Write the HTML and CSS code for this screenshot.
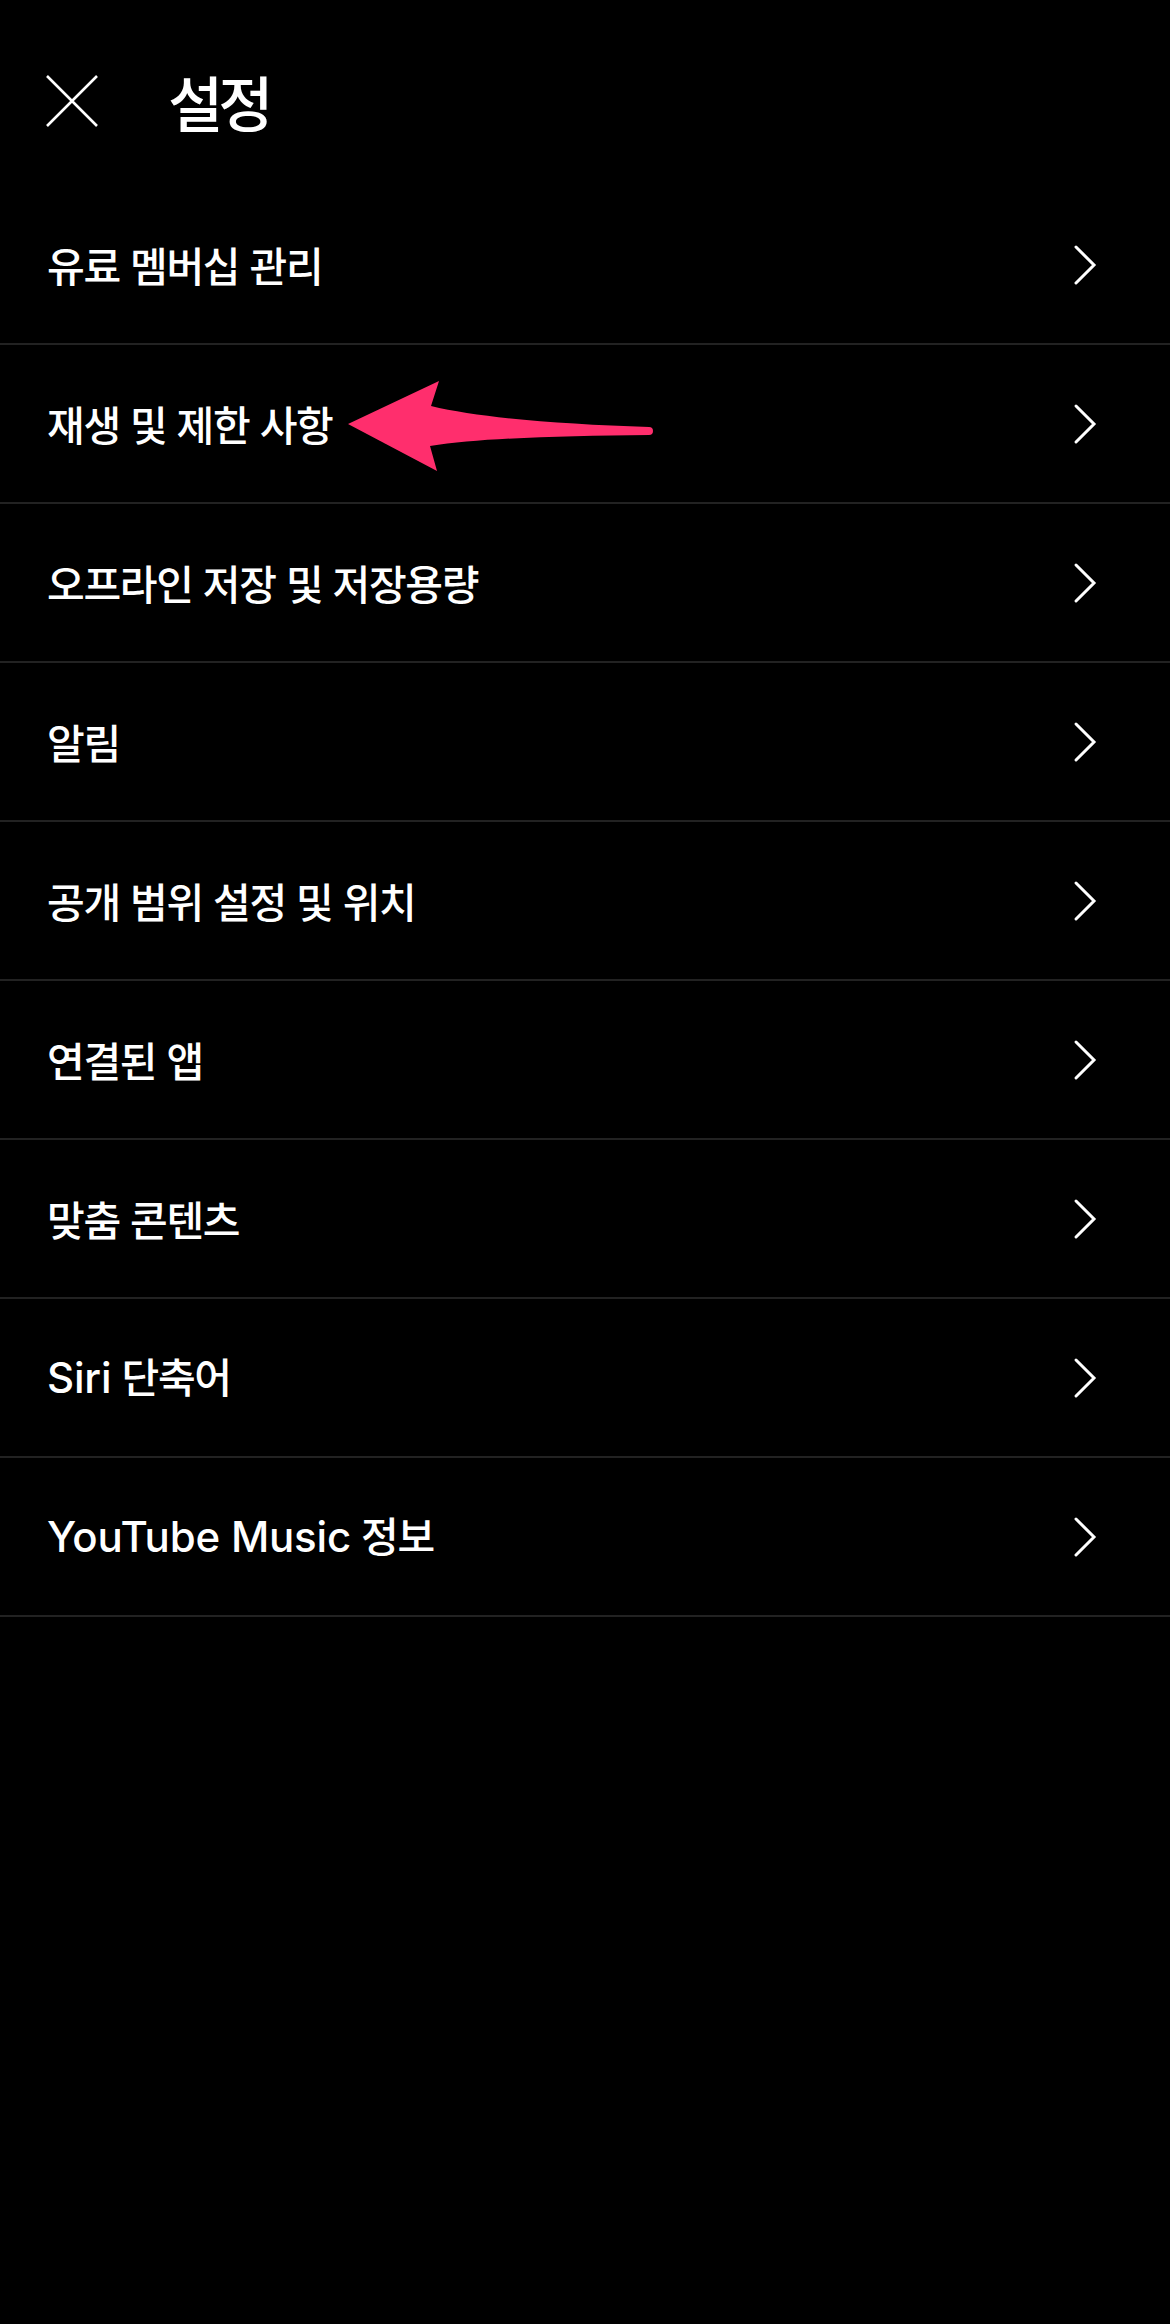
FILE: index.html
```html
<!DOCTYPE html>
<html lang="ko">
<head>
<meta charset="utf-8">
<title>설정</title>
<link rel="stylesheet" href="styles.css">
</head>
<body>
<div class="screen">
  <header class="header">
    <button class="close" aria-label="닫기">
      <svg width="52" height="52" viewBox="0 0 52 52"><path d="M1 1 L51 51 M51 1 L1 51" stroke="#fff" stroke-width="2.6" fill="none"/></svg>
    </button>
    <h1 class="title">설정</h1>
  </header>
  <ul class="list">
    <li class="row"><span class="label">유료 멤버십 관리</span><svg class="chev" width="24" height="42" viewBox="0 0 24 42"><path d="M3 3 L21 21 L3 39" stroke="#fff" stroke-width="3" fill="none" stroke-linecap="round"/></svg></li>
    <li class="row annotated"><span class="label">재생 및 제한 사항</span><svg class="chev" width="24" height="42" viewBox="0 0 24 42"><path d="M3 3 L21 21 L3 39" stroke="#fff" stroke-width="3" fill="none" stroke-linecap="round"/></svg>
      <svg class="arrow" width="320" height="110" viewBox="340 370 320 110"><path d="M348 424 L439 381 L431 406 C480 418 560 424 649 427 A4 4 0 0 1 649 435 C560 436 480 438 430 446 L437 471 Z" fill="#ff2e6d"/></svg>
    </li>
    <li class="row"><span class="label">오프라인 저장 및 저장용량</span><svg class="chev" width="24" height="42" viewBox="0 0 24 42"><path d="M3 3 L21 21 L3 39" stroke="#fff" stroke-width="3" fill="none" stroke-linecap="round"/></svg></li>
    <li class="row"><span class="label">알림</span><svg class="chev" width="24" height="42" viewBox="0 0 24 42"><path d="M3 3 L21 21 L3 39" stroke="#fff" stroke-width="3" fill="none" stroke-linecap="round"/></svg></li>
    <li class="row"><span class="label">공개 범위 설정 및 위치</span><svg class="chev" width="24" height="42" viewBox="0 0 24 42"><path d="M3 3 L21 21 L3 39" stroke="#fff" stroke-width="3" fill="none" stroke-linecap="round"/></svg></li>
    <li class="row"><span class="label">연결된 앱</span><svg class="chev" width="24" height="42" viewBox="0 0 24 42"><path d="M3 3 L21 21 L3 39" stroke="#fff" stroke-width="3" fill="none" stroke-linecap="round"/></svg></li>
    <li class="row"><span class="label">맞춤 콘텐츠</span><svg class="chev" width="24" height="42" viewBox="0 0 24 42"><path d="M3 3 L21 21 L3 39" stroke="#fff" stroke-width="3" fill="none" stroke-linecap="round"/></svg></li>
    <li class="row"><span class="label"><span class="latin">Siri</span> 단축어</span><svg class="chev" width="24" height="42" viewBox="0 0 24 42"><path d="M3 3 L21 21 L3 39" stroke="#fff" stroke-width="3" fill="none" stroke-linecap="round"/></svg></li>
    <li class="row"><span class="label"><span class="latin">YouTube Music</span> 정보</span><svg class="chev" width="24" height="42" viewBox="0 0 24 42"><path d="M3 3 L21 21 L3 39" stroke="#fff" stroke-width="3" fill="none" stroke-linecap="round"/></svg></li>
  </ul>
</div>
</body>
</html>
```
FILE: styles.css
```css
html, body {
  margin: 0;
  padding: 0;
  background: #000;
}

.screen {
  width: 1170px;
  min-height: 2324px;
  background: #000;
  color: #fff;
  font-family: "Noto Sans CJK KR", "Noto Sans", sans-serif;
}

.header {
  height: 186px;
  box-sizing: border-box;
  padding: 16px 0 0 46px;
  display: flex;
  align-items: center;
}

.close {
  width: 52px;
  height: 52px;
  padding: 0;
  border: 0;
  background: none;
  display: flex;
}

.title {
  margin: 0 0 0 70px;
  font-size: 60px;
  font-weight: 500;
  letter-spacing: -5px;
  line-height: 1.2;
}

.list {
  list-style: none;
  margin: 0;
  padding: 0;
}

.row {
  height: 157px;
  border-bottom: 2px solid #222;
  display: flex;
  align-items: center;
  justify-content: space-between;
  padding: 0 73px 0 47px;
}

.annotated {
  position: relative;
}

.label {
  font-size: 41px;
  font-weight: 500;
  letter-spacing: -1.3px;
  line-height: 1.2;
}

.latin {
  font-family: "Inter", "Roboto", sans-serif;
  font-size: 42px;
  letter-spacing: -0.2px;
}

.chev {
  display: block;
  flex: none;
}

.arrow {
  position: absolute;
  left: 340px;
  top: 25px;
}
```
